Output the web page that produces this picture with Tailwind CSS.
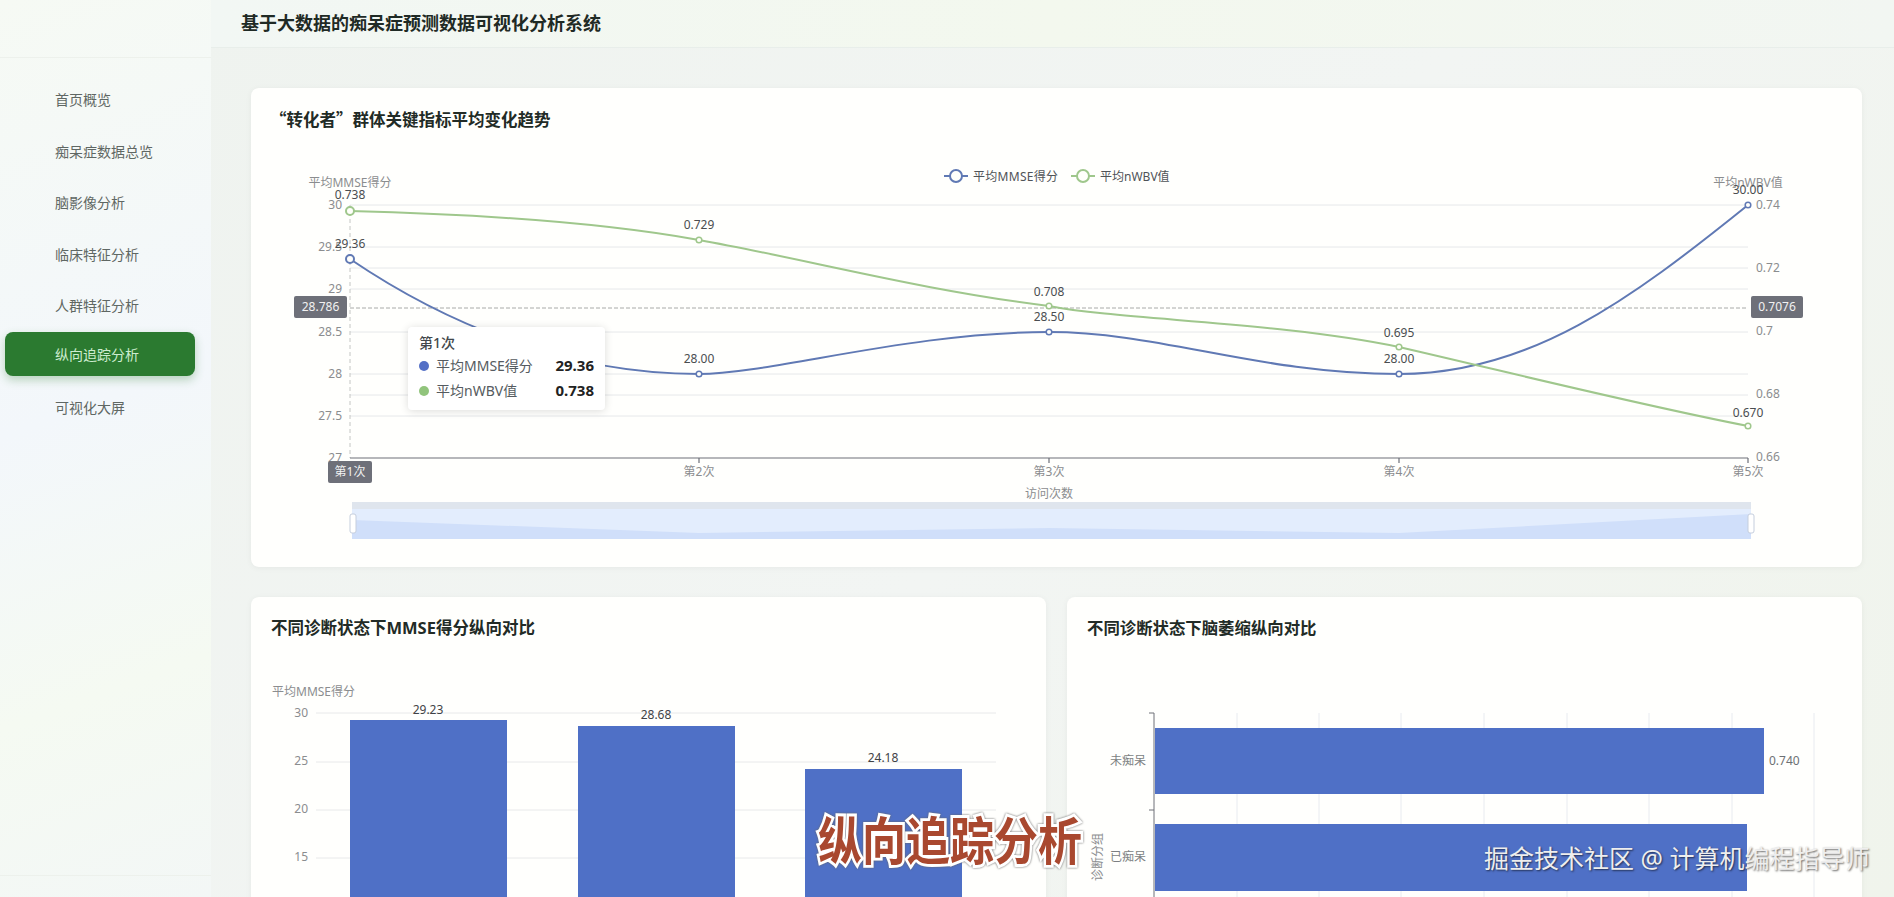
<!DOCTYPE html>
<html lang="zh">
<head>
<meta charset="utf-8">
<title>基于大数据的痴呆症预测数据可视化分析系统</title>
<script src="https://cdn.jsdelivr.net/npm/@tailwindcss/browser@4"></script>
</head>
<body class="relative h-screen overflow-hidden bg-[#f1f5f1] font-['Noto_Sans','Noto_Sans_CJK_SC',sans-serif]">
<div class="flex h-full">
  <aside class="flex h-full w-[211px] shrink-0 flex-col bg-[linear-gradient(160deg,#f6faf4,#f3f7fb_45%,#f5faf2_75%,#f3f7f6)] shadow-[1px_0_6px_rgba(0,0,0,0.03)]">
    <div class="h-[58px] shrink-0 border-b border-[#edf1ec]"></div>
    <nav class="flex flex-1 flex-col pt-[16px] text-[14px] text-[#5f6763]">
      <a class="flex h-[51.5px] shrink-0 items-center pl-[55px]">首页概览</a>
      <a class="flex h-[51.5px] shrink-0 items-center pl-[55px]">痴呆症数据总览</a>
      <a class="flex h-[51.5px] shrink-0 items-center pl-[55px]">脑影像分析</a>
      <a class="flex h-[51.5px] shrink-0 items-center pl-[55px]">临床特征分析</a>
      <a class="flex h-[51.5px] shrink-0 items-center pl-[55px]">人群特征分析</a>
      <div class="flex h-[51.5px] shrink-0 items-center px-[5px]">
        <a class="flex h-[44px] w-[190px] -translate-y-[3px] items-center rounded-lg bg-[#2b7a30] pl-[50px] text-[#cdeccf] shadow-[0_4px_10px_rgba(46,125,50,0.3)]">纵向追踪分析</a>
      </div>
      <a class="flex h-[48px] shrink-0 items-center pl-[55px]">可视化大屏</a>
    </nav>
    <div class="h-[22px] shrink-0 border-t border-[#edf1ec]"></div>
  </aside>
  <div class="flex min-w-0 flex-1 flex-col bg-[linear-gradient(135deg,#eff3ef,#f2f5f3_50%,#f0f4ec)]">
    <header class="flex h-[48px] shrink-0 items-center border-b border-[#e8eeea] bg-[linear-gradient(90deg,#f2f7f4,#f3f8ee_50%,#f2f6f2)] pb-[1px] pl-[30px]">
      <h1 class="text-[18px] font-bold text-[#1f2a25]">基于大数据的痴呆症预测数据可视化分析系统</h1>
    </header>
    <main class="flex min-h-0 flex-1 flex-col gap-[30px] pl-[40px] pr-[32px] pt-[40px]">
      <section class="h-[479px] shrink-0 rounded-lg bg-[#fffffd] shadow-[0_1px_6px_rgba(0,0,0,0.05)]">
        <div class="flex h-[64px] items-center pb-[1px] pl-[19px]">
          <h2 class="font-['Noto_Sans_CJK_SC',sans-serif] text-[16.5px] font-bold text-[#222b26]">“转化者”群体关键指标平均变化趋势</h2>
        </div>
        <div class="relative h-[415px]">
          <svg class="block h-[415px] w-full" viewBox="251 152 1611 415" font-size="12">
            <g stroke="#e6e8ea" stroke-width="1">
              <path d="M350 205H1748M350 247H1748M350 268H1748M350 289H1748M350 332H1748M350 374H1748M350 395H1748M350 416H1748"/>
            </g>
            <path d="M350 205V458" stroke="#c4c6c4" stroke-dasharray="4 3"/>
            <path d="M350 308H1748" stroke="#a8aaa8" stroke-dasharray="4 2"/>
            <path d="M350 458H1748M699 458v5M1049 458v5M1399 458v5M1748 458v5" stroke="#6e7079" stroke-width="1.2" fill="none"/>
            <path d="M350 259C440 320 560 374 699 374C770 374 910 332 1049 332C1160 332 1260 374 1399 374C1530 374 1630 300 1748 205" fill="none" stroke="#6079b4" stroke-width="2"/>
            <path d="M350 211C470 214 600 222 699 240C810 260 920 290 1049 306C1120 320 1280 322 1399 347C1520 375 1640 405 1748 426" fill="none" stroke="#9fc78c" stroke-width="2"/>
            <g fill="#fffffb" stroke="#6079b4" stroke-width="1.5">
              <circle cx="350" cy="259" r="4" stroke-width="2"/><circle cx="699" cy="374" r="2.8"/><circle cx="1049" cy="332" r="2.8"/><circle cx="1399" cy="374" r="2.8"/><circle cx="1748" cy="205" r="2.8"/>
            </g>
            <g fill="#fffffb" stroke="#9fc78c" stroke-width="1.5">
              <circle cx="350" cy="211" r="4" stroke-width="2"/><circle cx="699" cy="240" r="2.8"/><circle cx="1049" cy="306" r="2.8"/><circle cx="1399" cy="347" r="2.8"/><circle cx="1748" cy="426" r="2.8"/>
            </g>
            <g fill="#8b8d8f" text-anchor="end" dominant-baseline="central">
              <text x="342" y="204">30</text><text x="342" y="246">29.5</text><text x="342" y="288">29</text><text x="342" y="331">28.5</text><text x="342" y="373">28</text><text x="342" y="415">27.5</text><text x="342" y="457">27</text>
            </g>
            <g fill="#8b8d8f" dominant-baseline="central">
              <text x="1756" y="204">0.74</text><text x="1756" y="267">0.72</text><text x="1756" y="330">0.7</text><text x="1756" y="393">0.68</text><text x="1756" y="456">0.66</text>
            </g>
            <g fill="#8b8d8f" text-anchor="middle" dominant-baseline="central">
              <text x="350" y="182">平均MMSE得分</text><text x="1748" y="182">平均nWBV值</text>
              <text x="699" y="471">第2次</text><text x="1049" y="471">第3次</text><text x="1399" y="471">第4次</text><text x="1748" y="471">第5次</text>
              <text x="1049" y="493">访问次数</text>
            </g>
            <g fill="#4a4d50" text-anchor="middle" dominant-baseline="central">
              <text x="350" y="194">0.738</text><text x="350" y="243">29.36</text><text x="699" y="224">0.729</text><text x="699" y="358">28.00</text>
              <text x="1049" y="291">0.708</text><text x="1049" y="316">28.50</text><text x="1399" y="332">0.695</text><text x="1399" y="358">28.00</text>
              <text x="1748" y="412">0.670</text><text x="1748" y="189">30.00</text>
            </g>
            <path d="M944 176H968" stroke="#6079b4" stroke-width="2"/><circle cx="956" cy="176" r="6" fill="#fffffb" stroke="#6079b4" stroke-width="2"/>
            <text x="973" y="176" fill="#4f5357" dominant-baseline="central" textLength="85">平均MMSE得分</text>
            <path d="M1071 176H1095" stroke="#9fc78c" stroke-width="2"/><circle cx="1083" cy="176" r="6" fill="#fffffb" stroke="#9fc78c" stroke-width="2"/>
            <text x="1100" y="176" fill="#4f5357" dominant-baseline="central">平均nWBV值</text>
            <rect x="352" y="502" width="1399" height="37" fill="#e3edfd"/>
            <rect x="352" y="502" width="1399" height="7" fill="#dfe5ed"/>
            <path d="M352 520L699 533L1049 528L1399 533L1751 514V539H352Z" fill="#d0dffa"/>
            <rect x="350" y="514" width="6" height="19" rx="2" fill="#fff" stroke="#c5cedd"/>
            <rect x="1748" y="514" width="6" height="19" rx="2" fill="#fff" stroke="#c5cedd"/>
            <rect x="294" y="296" width="53" height="22" rx="2" fill="#6e7079"/>
            <text x="320.5" y="306" fill="#f2f2f2" text-anchor="middle" dominant-baseline="central">28.786</text>
            <rect x="1751" y="296" width="52" height="22" rx="2" fill="#6e7079"/>
            <text x="1777" y="306" fill="#f2f2f2" text-anchor="middle" dominant-baseline="central">0.7076</text>
            <rect x="328" y="461" width="44" height="22" rx="2" fill="#6e7079"/>
            <text x="350" y="471" fill="#f2f2f2" text-anchor="middle" dominant-baseline="central">第1次</text>
          </svg>
          <div class="absolute left-[157px] top-[175px] h-[83px] w-[197px] rounded bg-white px-[11px] pt-[5px] text-[14px] text-[#555b60] shadow-[0_1px_8px_rgba(0,0,0,0.14)]">
            <div class="h-[21px] leading-[21px] font-medium text-[#43484c]">第1次</div>
            <div class="flex h-[25px] items-center"><span class="mr-[7px] size-[10px] rounded-full bg-[#5470c6]"></span><span>平均MMSE得分</span><span class="ml-auto text-[15px] font-bold text-[#222]">29.36</span></div>
            <div class="flex h-[25px] items-center"><span class="mr-[7px] size-[10px] rounded-full bg-[#91c47c]"></span><span>平均nWBV值</span><span class="ml-auto text-[15px] font-bold text-[#222]">0.738</span></div>
          </div>
        </div>
      </section>
      <div class="grid shrink-0 grid-cols-2 gap-[21px]">
        <section class="h-[340px] rounded-lg bg-[#fffffd] shadow-[0_1px_6px_rgba(0,0,0,0.05)]">
          <div class="flex h-[64px] items-center px-[20px] pb-[1px]"><h2 class="text-[16.5px] font-bold text-[#222b26]">不同诊断状态下MMSE得分纵向对比</h2></div>
          <svg class="block h-[276px] w-full" viewBox="251 661 795 276" font-size="12">
            <path d="M316 713H996M316 762H996M316 810H996M316 858H996" stroke="#e8e9ea"/>
            <g fill="#4f70c6"><rect x="350" y="720" width="157" height="220"/><rect x="578" y="726" width="157" height="220"/><rect x="805" y="769" width="157" height="180"/></g>
            <text x="272" y="691" fill="#8b8d8f" dominant-baseline="central">平均MMSE得分</text>
            <g fill="#8b8d8f" text-anchor="end" dominant-baseline="central"><text x="308" y="712">30</text><text x="308" y="760">25</text><text x="308" y="808">20</text><text x="308" y="856">15</text></g>
            <g fill="#3f4246" text-anchor="middle" dominant-baseline="central"><text x="428" y="709">29.23</text><text x="656" y="714">28.68</text><text x="883" y="757">24.18</text></g>
          </svg>
        </section>
        <section class="h-[340px] rounded-lg bg-[#fffffd] shadow-[0_1px_6px_rgba(0,0,0,0.05)]">
          <div class="flex h-[64px] items-center px-[20px] pb-[1px]"><h2 class="text-[16.4px] font-bold text-[#222b26]">不同诊断状态下脑萎缩纵向对比</h2></div>
          <svg class="block h-[276px] w-full" viewBox="1067 661 795 276" font-size="12">
            <path d="M1237 713V937M1319 713V937M1401 713V937M1484 713V937M1567 713V937M1649 713V937M1732 713V937M1814 713V937" stroke="#e8ebf0"/>
            <path d="M1149 713H1154V937M1149 810H1154" fill="none" stroke="#6e7079"/>
            <g fill="#4f70c6"><rect x="1155" y="728" width="609" height="66"/><rect x="1155" y="824" width="592" height="67"/></g>
            <g fill="#7c7f82" text-anchor="end" dominant-baseline="central"><text x="1146" y="760">未痴呆</text><text x="1146" y="856">已痴呆</text></g>
            <text x="1769" y="760" fill="#6d7074" dominant-baseline="central">0.740</text>
            <text transform="translate(1097 857) rotate(-90)" fill="#8b8d8f" text-anchor="middle" dominant-baseline="central">诊断分组</text>
          </svg>
        </section>
      </div>
    </main>
  </div>
</div>
<div class="absolute left-[818px] top-[811px] origin-top scale-y-[1.16] text-[44px] leading-[50px] font-bold whitespace-nowrap text-[#a9482f] [-webkit-text-stroke:5px_#ffffff] [paint-order:stroke_fill] [filter:drop-shadow(0_0_1px_#666)]">纵向追踪分析</div>
<div class="absolute left-[1484px] top-[842px] text-[25px] leading-[32px] whitespace-nowrap text-[#eeeeee] [text-shadow:1px_1px_2px_rgba(0,0,0,0.6)]">掘金技术社区 @ 计算机编程指导师</div>
</body>
</html>
